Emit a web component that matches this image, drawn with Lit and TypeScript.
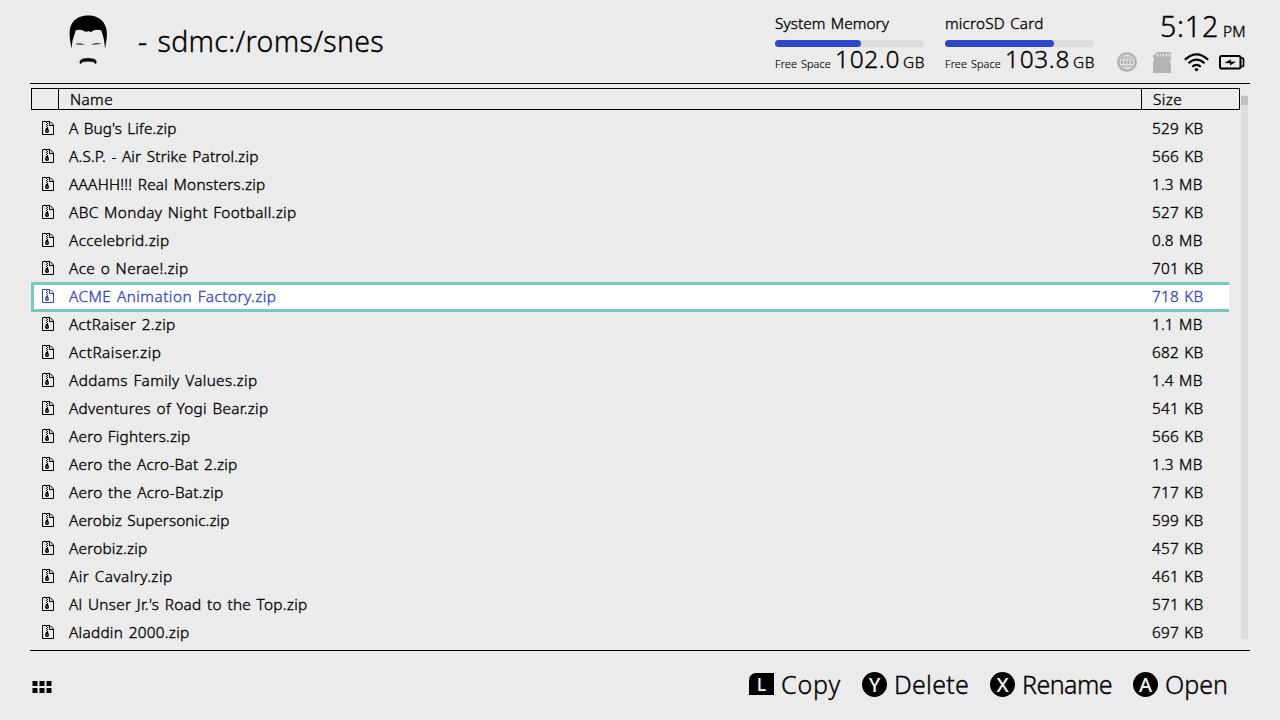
import { LitElement, html, css, svg } from "lit";
import { customElement, property } from "lit/decorators.js";

/** A single line of text whose tracking is adjusted to fill a given width. */
@customElement("fit-text")
class FitText extends LitElement {
  @property() text = "";
  @property({ type: Number }) width = 0;
  static styles = css`
    :host { display: inline-block; white-space: pre; word-spacing: 0.08em; -webkit-text-stroke: 0.35px currentColor; }
  `;
  render() {
    return html`<span>${this.text}</span>`;
  }
  updated() {
    const span = this.renderRoot.querySelector("span") as HTMLElement;
    span.style.letterSpacing = "0px";
    const natural = span.getBoundingClientRect().width;
    if (this.width && natural) {
      span.style.letterSpacing = (this.width - natural) / this.text.length + "px";
    }
  }
}

const t = (text: string, width: number, cls = "") =>
  html`<fit-text class=${cls} .text=${text} .width=${width}></fit-text>`;

const FILES: [string, number, string, number][] = [
  ["A Bug's Life.zip", 107.5, "529 KB", 51.5],
  ["A.S.P. - Air Strike Patrol.zip", 189.5, "566 KB", 51.5],
  ["AAAHH!!! Real Monsters.zip", 196.5, "1.3 MB", 50.5],
  ["ABC Monday Night Football.zip", 227.5, "527 KB", 51.5],
  ["Accelebrid.zip", 100.5, "0.8 MB", 50.5],
  ["Ace o Nerae!.zip", 119.5, "701 KB", 51.5],
  ["ACME Animation Factory.zip", 207.5, "718 KB", 51.5],
  ["ActRaiser 2.zip", 106.5, "1.1 MB", 50.5],
  ["ActRaiser.zip", 92.5, "682 KB", 51.5],
  ["Addams Family Values.zip", 188.5, "1.4 MB", 50.5],
  ["Adventures of Yogi Bear.zip", 199.5, "541 KB", 51.5],
  ["Aero Fighters.zip", 121.5, "566 KB", 51.5],
  ["Aero the Acro-Bat 2.zip", 168.5, "1.3 MB", 50.5],
  ["Aero the Acro-Bat.zip", 154.5, "717 KB", 51.5],
  ["Aerobiz Supersonic.zip", 160.5, "599 KB", 51.5],
  ["Aerobiz.zip", 78.5, "457 KB", 51.5],
  ["Air Cavalry.zip", 103.5, "461 KB", 51.5],
  ["Al Unser Jr.'s Road to the Top.zip", 238.5, "571 KB", 51.5],
  ["Aladdin 2000.zip", 120.5, "697 KB", 51.5],
];
const SELECTED = 6;

const zipIcon = html`<svg class="zip" width="12" height="14" viewBox="0 0 12 14">
  <path d="M.5.5H8L11.5 4V13.5H.5Z" fill="none" stroke="currentColor" />
  <path d="M7.5.5V4.5H11.5" fill="none" stroke="currentColor" />
  <path d="M4 1h1v1H4zM5 2h1v1H5zM4 3h1v1H4zM5 4h1v1H5zM4 5h1v1H4zM5 6h1v1H5z" fill="currentColor" />
  <path fill-rule="evenodd" d="M4 7H6L7 10Q7 12 5 12T3 10ZM4.5 9.5V10.5H5.5V9.5Z" fill="currentColor" />
</svg>`;

const face = html`<svg class="face" width="39" height="51" viewBox="0 0 40 52" preserveAspectRatio="none">
  <path d="M2.600 34.500L1 25C.2 17 .6 12 3.600 8C7 2.500 13 .4 19.500.4C27 .4 32.500 3 35.600 8C38.600 12.500 39.500 18 38.600 24L37 34.500L36 26C35.200 21.500 34 18.500 33 15.500C29 14.500 26.500 15 24.200 16.200C22.500 17.700 21.500 17.300 20 16.200C18 17.300 16.500 17.200 15 16C12 14.700 9 14.700 6.700 15.700C6.200 18.500 5 22 3.600 26Z" />
  <path d="M7 29.600Q11 28.200 15.500 30.200Q11 30.200 7 29.600ZM32.500 29.200Q28 28 23.500 30.200Q28 29.800 32.500 29.200Z" stroke="#555" stroke-width=".5" />
  <path d="M11.500 49.500C10.500 48 11.500 45.400 14 44.900Q19 43.500 25 44.900C28 45.600 28.600 48 27.600 49.500Q26.500 50 26 47.900Q19.500 46.300 13.200 47.900Q12.700 50 11.500 49.500Z" stroke="#000" stroke-width=".5" />
</svg>`;

const globe = html`<svg width="20" height="20" viewBox="0 0 20 20">
  <circle cx="10" cy="10" r="10" fill="#b3b3b3" />
  <g fill="none" stroke="#e6e6e6" stroke-width="1">
    <circle cx="10" cy="10" r="6.900" /><ellipse cx="10" cy="10" rx="3.400" ry="6.900" />
    <path d="M10 3V17M3.500 8H16.500M3.500 12.500H16.500" />
  </g>
</svg>`;
const card = html`<svg width="18" height="21" viewBox="0 0 18 21">
  <path d="M4 0H18V8L17 9V11L18 12V21H0V9.500L1 8.500V6.500L0 5.500V4Z" fill="#b3b3b3" />
  <path d="M4.500 1.500V4.500M7.500 1.500V4.500M10.500 1.500V4.500M13.500 1.500V4.500M16.300 1.500V4.500" stroke="#ebebeb" stroke-width="1.300" />
</svg>`;
const wifi = html`<svg width="25" height="19" viewBox="0 0 25 19">
  <g fill="none" stroke="#000" stroke-width="2.100">
    <path d="M.8 6.800Q12.500-4.200 24.200 6.800M4.500 10.300Q12.500 2.900 20.500 10.300M8.200 13.700Q12.500 9.900 16.800 13.700" />
  </g>
  <circle cx="12.500" cy="16.600" r="1.700" />
</svg>`;
const battery = html`<svg width="26" height="15" viewBox="0 0 26 15">
  <rect x="1" y="1" width="20.500" height="12.500" rx="1.800" fill="none" stroke="#000" stroke-width="2" />
  <path d="M21.500 3H23.500Q24.500 3 24.500 4V10.500Q24.500 11.500 23.500 11.500H21.500" fill="none" stroke="#000" stroke-width="1.700" />
  <path d="M5.500 8L11.800 4.300V6.500L17 6.700L11 10.500V8.300Z" />
</svg>`;

const roundBadge = (letter: string) => html`<span class="badge">${letter}</span>`;

const storage = (name: string, nameW: number, used: number, free: string) => html`
  <div class="storage">
    ${t(name, nameW, "sname")}
    <div class="bar"><div class="used" style="width:${used}px"></div></div>
    <div class="free">
      ${t("Free Space", 56, "flabel")}${t(free, 65, "fnum")}${t("GB", 22, "funit")}
    </div>
  </div>`;

@customElement("app-root")
class AppRoot extends LitElement {
  static styles = css`
    :host {
      display: flex; flex-direction: column; width: 1280px; height: 720px; overflow: hidden;
      box-sizing: border-box; padding: 0 30px; background: #ebebeb; color: #000;
      font-family: "Noto Sans", "Open Sans", sans-serif; font-size: 15.300px; font-weight: 300;
    }
    svg { display: block; flex: none; }
    header { display: flex; height: 83px; border-bottom: 1px solid #000; flex: none; }
    .face { margin: 15px 0 0 39px; }
    .title { margin: 21px 0 0 30px; width: 637px; font-size: 28.500px; line-height: 40px; }
    .storage { width: 150px; margin-right: 20px; padding-top: 13px; }
    .sname { display: block; font-size: 15.300px; line-height: 20px; }
    .bar { margin-top: 7px; height: 7px; border-radius: 4px; background: #dcdcdc; width: 149px; }
    .used { height: 7px; border-radius: 4px; background: #3148c2; }
    .free { display: flex; align-items: baseline; line-height: 24px; white-space: nowrap; height: 26px; }
    .flabel { font-size: 10.800px; width: 61px; -webkit-text-stroke-width: 0.15px; }
    .fnum { font-size: 24.500px; width: 69px; }
    .funit { font-size: 15.300px; }
    .status { width: 130px; }
    .clock { display: flex; justify-content: flex-end; align-items: baseline; height: 40px; line-height: 40px; padding: 6px 0 0; margin-right: -1px; }
    .time { font-size: 28.500px; margin-right: 4px; }
    .pm { font-size: 15.300px; }
    .icons { display: flex; align-items: center; padding: 5px 0 0 2px; height: 22px; }
    .icons svg:nth-child(2) { margin-left: 16px; }
    .icons svg:nth-child(3) { margin-left: 13px; }
    .icons svg:nth-child(4) { margin-left: 10px; margin-top: 1px; }
    main { display: flex; height: 566px; flex: none; border-bottom: 1px solid #000; }
    .table { width: 1209px; margin: 4px 1px 0 1px; }
    .head { display: grid; grid-template-columns: 26px 1083px 1fr; box-sizing: border-box; height: 22px; border: 1px solid #000; line-height: 20px; }
    .head > div { border-left: 1px solid #000; padding-left: 11px; height: 20px; box-sizing: border-box; }
    .head > div:first-child { border: 0; padding: 0; }
    .rows { padding-top: 5px; }
    .row { display: grid; grid-template-columns: 38px 1083px 1fr; box-sizing: border-box; width: 1198px; height: 28px; line-height: 26px; }
    .row.on {
      height: 30px; margin: -1px 0; line-height: 22px; grid-template-columns: 35px 1083px 1fr;
      border: 3px solid #7ac5bd; border-right: 0; background: #fff; color: #3148c2;
    }
    .zip { margin: 6px 0 0 11px; }
    .on .zip { margin: 4px 0 0 8px; }
    .scroll { box-sizing: border-box; width: 7px; height: 544px; margin-top: 11px; padding-top: 1px; background: #dcdcdc; }
    .thumb { height: 9px; background: #bfbfbf; }
    footer { display: flex; align-items: center; height: 66px; font-size: 25px; line-height: 34px; padding-right: 22px; }
    .dots { margin: 6px auto 0 2px; }
    .act { display: flex; align-items: center; margin-left: 21px; }
    .act fit-text { margin-left: 7px; }
    .act > * { flex: none; }
    .badge, .key {
      display: flex; align-items: center; justify-content: center; width: 25px; height: 25px; border-radius: 50%;
      background: #000; color: #f4f4f4; font: 500 20px/25px "Noto Sans", sans-serif;
    }
    .key { width: 25px; height: 22px; border-radius: 7px 0 0 0; font-size: 18px; line-height: 22px; }
  `;

  render() {
    return html`
      <header>
        ${face}
        <div class="title">${t("- sdmc:/roms/snes", 246)}</div>
        ${storage("System Memory", 114, 86, "102.0")}
        ${storage("microSD Card", 98.5, 109, "103.8")}
        <div class="status">
          <div class="clock">${t("5:12", 59, "time")}${t("PM", 23, "pm")}</div>
          <div class="icons">${globe}${card}${wifi}${battery}</div>
        </div>
      </header>
      <main>
        <div class="table">
          <div class="head"><div></div><div>${t("Name", 43)}</div><div>${t("Size", 29)}</div></div>
          <div class="rows">
            ${FILES.map(
              ([name, nw, size, sw], i) => html`<div class="row ${i === SELECTED ? "on" : ""}">
                ${zipIcon}<div>${t(name, nw)}</div><div>${t(size, sw)}</div>
              </div>`
            )}
          </div>
        </div>
        <div class="scroll"><div class="thumb"></div></div>
      </main>
      <footer>
        <svg class="dots" width="20" height="12" viewBox="0 0 20 12">
          ${[0, 7, 14].map((x) => [0, 7].map((y) => svg`<rect x=${x + 0.5} y=${y} width="5" height="5" />`))}
        </svg>
        <div class="act"><span class="key">L</span>${t("Copy", 60)}</div>
        <div class="act">${roundBadge("Y")}${t("Delete", 75)}</div>
        <div class="act">${roundBadge("X")}${t("Rename", 90)}</div>
        <div class="act">${roundBadge("A")}${t("Open", 63)}</div>
      </footer>
    `;
  }
}
